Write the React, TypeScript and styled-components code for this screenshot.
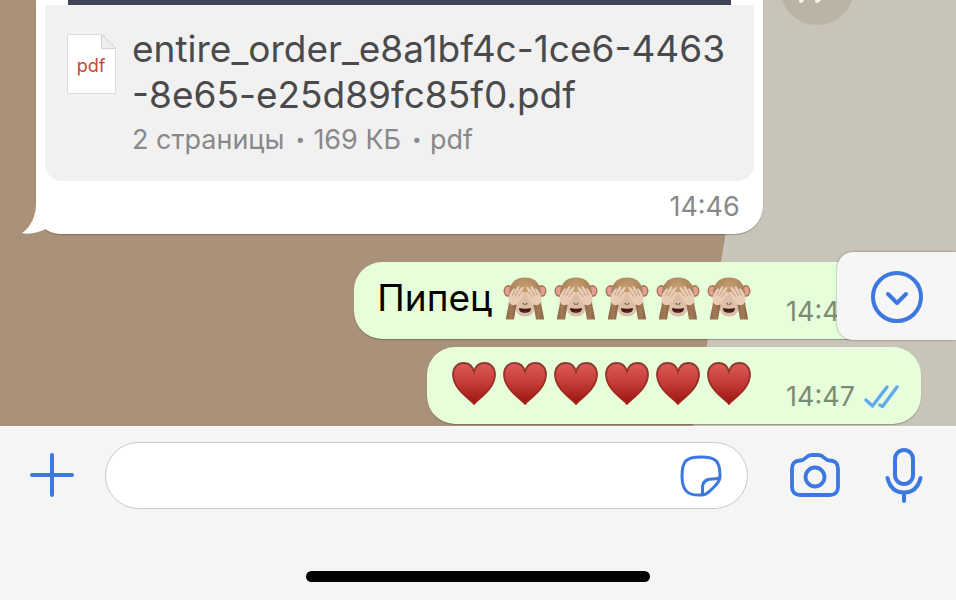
import React from "react";
import styled, { createGlobalStyle } from "styled-components";

const BLUE = "#3b78e0";

const GlobalStyle = createGlobalStyle`
  * { box-sizing: border-box; }
  body { margin: 0; font-family: Inter, "Noto Sans", sans-serif; }
  button { border: 0; padding: 0; background: none; cursor: pointer; display: grid; place-items: center; }
  svg { display: block; flex: none; }
`;

const Screen = styled.div`
  display: flex;
  flex-direction: column;
  height: 100vh;
  overflow: hidden;
  background: #f5f5f5;
`;

const Chat = styled.main`
  position: relative;
  flex: 1;
  min-height: 0;
  display: flex;
  flex-direction: column;
  justify-content: flex-end;
  gap: 8px;
  padding-bottom: 2px;
  overflow: hidden;
  background: #aa9179;
`;

const Wallpaper = styled.div`
  position: absolute;
  inset: 0;
  background: #c9c4b8;
  clip-path: polygon(79% 0, 100% 0, 100% 100%, 72.5% 100%, 75.9% 55%);
`;

const IncomingRow = styled.div`
  position: relative;
  display: flex;
  align-items: flex-start;
  gap: 17px;
  padding-left: 36px;
  margin-bottom: 20px;
`;

const DocumentBubble = styled.article`
  position: relative;
  width: 79%;
  padding: 0 9px;
  background: #fff;
  border-radius: 0 0 28px 24px;
  box-shadow: 0 1px 1px rgba(0, 0, 0, 0.25);
`;

const Tail = styled.svg`
  position: absolute;
  left: -14px;
  bottom: 0;
`;

const Preview = styled.div`
  height: 5px;
  margin: 0 23px;
  background: #3f4555;
`;

const FileCard = styled.a`
  position: relative;
  display: flex;
  gap: 16px;
  padding: 21px 22px 24px;
  border-radius: 0 0 17px 17px;
  background: #f1f1f1;
  color: #4a4a4c;
  text-decoration: none;
`;

const FileIcon = styled.svg`
  margin-top: 8px;
`;

const FileName = styled.div`
  font-size: 37px;
  line-height: 46px;
  white-space: nowrap;
`;

const FileMeta = styled.div`
  display: flex;
  align-items: center;
  gap: 11px;
  margin-top: 4px;
  font-size: 27px;
  line-height: 35px;
  color: #89898b;
`;

const Dot = styled.small`
  width: 7px;
  font-size: 17px;
  text-align: center;
`;

const Time = styled.time`
  font-size: 27px;
  line-height: 32px;
  color: #89898b;
`;

const BubbleFooter = styled.div`
  display: flex;
  justify-content: flex-end;
  padding: 10px 14px 11px;
`;

const ForwardButton = styled.button`
  width: 74px;
  height: 74px;
  margin-top: -49px;
  border-radius: 50%;
  background: #bbb4a5;
`;

const Outgoing = styled.article<{ $inset: number }>`
  position: relative;
  align-self: flex-end;
  display: flex;
  align-items: center;
  height: 77px;
  margin-right: 35px;
  padding: 0 22px 0 ${(p) => p.$inset}px;
  border-radius: 28px;
  background: #e6ffda;
  box-shadow: 0 1px 1px rgba(0, 0, 0, 0.25);
`;

const MessageText = styled.span`
  margin: 0 11px 5px 0;
  font-size: 37px;
  line-height: 46px;
  color: #000;
`;

const EmojiRow = styled.span`
  display: flex;
  gap: 7px;
  margin: 0 35px 5px 0;
`;

const Stamp = styled.span`
  display: flex;
  align-items: center;
  gap: 9px;
  align-self: flex-end;
  padding-bottom: 11px;
  time { color: #7c8b75; }
`;

const ScrollDown = styled.button`
  position: absolute;
  right: 0;
  bottom: 86px;
  width: 119px;
  height: 88px;
  padding-top: 2px;
  border-radius: 16px 0 0 16px;
  background: #f6f6f6;
  box-shadow: 0 0 2px rgba(0, 0, 0, 0.5);
`;

const Composer = styled.footer`
  display: flex;
  flex-direction: column;
  border-top: 1px solid #f9f9f8;
  background: #f5f5f5;
`;

const Controls = styled.form`
  display: flex;
  align-items: center;
  padding: 15px 33px 0 30px;
`;

const Field = styled.div`
  flex: 1;
  min-width: 0;
  display: flex;
  align-items: center;
  height: 67px;
  margin: 0 42px 0 31px;
  padding: 0 25px 0 28px;
  border: 1px solid #c9c9c9;
  border-radius: 34px;
  background: #fff;
`;

const TextInput = styled.input`
  flex: 1;
  min-width: 0;
  border: 0;
  outline: 0;
  background: transparent;
  font: 36px Inter, sans-serif;
`;

const MicButton = styled.button`
  margin-left: 45px;
`;

const HomeIndicator = styled.div`
  align-self: center;
  width: 36%;
  height: 11px;
  margin: 62px 0 18px;
  border-radius: 6px;
  background: #000;
`;

const Monkey = () => (
  <svg width="44" height="43" viewBox="0 0 44 43">
    <ellipse cx="5.500" cy="14" rx="5" ry="6" fill="#a57952" />
    <ellipse cx="38.500" cy="14" rx="5" ry="6" fill="#a57952" />
    <ellipse cx="5" cy="14" rx="3" ry="4.200" fill="#e79d95" />
    <ellipse cx="39" cy="14" rx="3" ry="4.200" fill="#e79d95" />
    <path d="M22 .5C11 .5 6 8 6 17c0 10 6 17 16 17s16-7 16-17C38 8 33 .5 22 .5Z" fill="url(#fur)" />
    <path d="M22 15c-5 0-10 7-9.500 16 .5 5 4 8.500 9.500 8.500S31 36 31.500 31C32 22 27 15 22 15Z" fill="#dcbfa6" />
    <path d="M20.200 26.300l.8 1.200M23.800 26.300l-.8 1.200" stroke="#745044" strokeWidth="1.200" strokeLinecap="round" />
    <path d="M16 31q6 1.500 12 0c0 3.800-2.500 4.800-6 4.800s-6-1-6-4.800Z" fill="#421d1b" />
    <path d="M19.500 35q2.500-.9 5 0-2.500.9-5 0Z" fill="#8f3a34" />
    <path d="M6 23 13.500 28 11 42.500H3C3.500 35 6 30 6 23Z" fill="url(#arm)" />
    <path d="M38 23 30.500 28 33 42.500h8C40.500 35 38 30 38 23Z" fill="url(#arm)" />
    <path d="M6 25C4.500 20 6.500 16 10 12q1-1.500 2 0l-.5 2 3-4.500q1.500-1 2 .5l-1.500 4 4-4q1.500-.6 1.600 1L18 16l2.600-1.500q1.300.3.6 1.800C18 21 17 26 12 28c-3 .5-5-.5-6-3Z" fill="#e8ccb5" />
    <path d="M38 25c1.500-5-.5-9-4-13q-1-1.500-2 0l.5 2-3-4.500q-1.500-1-2 .5l1.500 4-4-4q-1.500-.6-1.600 1L26 16l-2.600-1.500q-1.300.3-.6 1.800C26 21 27 26 32 28c3 .5 5-.5 6-3Z" fill="#e8ccb5" />
    <path d="M11.500 14 9.800 18M15 14l-2.500 4.500M18 16l-3 3.500M32.500 14l1.700 4M29 14l2.500 4.500M26 16l3 3.500" fill="none" stroke="#bd987b" strokeWidth=".9" strokeLinecap="round" />
  </svg>
);

const Heart = () => (
  <svg width="44" height="43" viewBox="0 0 44 43">
    <path d="M22 42C18 37 1 27 1 12.500 1 5.500 5.500 1 11.500 1 16.500 1 20.500 4 22 9.500 23.500 4 27.500 1 32.500 1 38.500 1 43 5.500 43 12.500 43 27 26 37 22 42Z" fill="url(#heart)" stroke="url(#heartEdge)" strokeWidth="1.800" />
  </svg>
);

const GradientHolder = styled.div`
  height: 0;
  overflow: hidden;
`;

const Gradients = () => (
  <GradientHolder aria-hidden="true">
    <svg width="0" height="0">
      <defs>
        <radialGradient id="fur" cx=".5" cy=".3" r=".65">
          <stop offset="0" stopColor="#c9a071" />
          <stop offset="1" stopColor="#9c7550" />
        </radialGradient>
        <linearGradient id="arm" x1="0" x2="1" y1="0" y2="0">
          <stop offset="0" stopColor="#8f6848" />
          <stop offset=".5" stopColor="#a27a57" />
          <stop offset="1" stopColor="#886142" />
        </linearGradient>
        <linearGradient id="heart" x1="0" x2="0" y1="0" y2="1">
          <stop offset="0" stopColor="#dc5c58" />
          <stop offset=".5" stopColor="#c53a35" />
          <stop offset="1" stopColor="#98150f" />
        </linearGradient>
        <linearGradient id="heartEdge" x1="0" x2="0" y1="0" y2="1">
          <stop offset="0" stopColor="#8c3a2e" />
          <stop offset="1" stopColor="#a82019" />
        </linearGradient>
      </defs>
    </svg>
  </GradientHolder>
);

const Emojis = ({ label, count, children }: { label: string; count: number; children: React.ReactNode }) => (
  <EmojiRow role="img" aria-label={label.repeat(count)}>
    {Array.from({ length: count }, (_, i) => (
      <React.Fragment key={i}>{children}</React.Fragment>
    ))}
  </EmojiRow>
);

const Ticks = () => (
  <svg width="35" height="24" viewBox="0 0 35 24" fill="none" stroke="#62aaf0" strokeWidth="3.400" strokeLinecap="round" strokeLinejoin="round">
    <path d="M2 15 8.500 21 23 2M16 20l2.500 1.500L33 2" />
  </svg>
);

export default function App() {
  return (
    <Screen>
      <GlobalStyle />
      <Gradients />
      <Chat>
        <Wallpaper />
        <IncomingRow>
          <DocumentBubble>
            <Tail width="36" height="44" viewBox="0 0 36 44" fill="#fff">
              <path d="M14 0v14C14 26 9 37 0 43c8 2 17-1 24-4V0Z" />
            </Tail>
            <Preview />
            <FileCard href="#file">
              <FileIcon width="49" height="60" viewBox="0 0 49 60">
                <path d="M.5.500H35L48.500 14v45.500H.5Z" fill="#fff" stroke="#dcdcdc" />
                <path d="M34.500.500V14.500h14Z" fill="#efefef" stroke="#d4d4d4" />
                <text x="24" y="38" textAnchor="middle" fontSize="18" fill="#c3483f">pdf</text>
              </FileIcon>
              <div>
                <FileName>entire_order_e8a1bf4c-1ce6-4463<br />-8e65-e25d89fc85f0.pdf</FileName>
                <FileMeta>
                  <span>2 страницы</span><Dot>•</Dot><span>169 КБ</span><Dot>•</Dot><span>pdf</span>
                </FileMeta>
              </div>
            </FileCard>
            <BubbleFooter><Time>14:46</Time></BubbleFooter>
          </DocumentBubble>
          <ForwardButton aria-label="Переслать">
            <svg width="40" height="36" viewBox="0 0 40 36" fill="none" stroke="#f5f2eb" strokeWidth="4" strokeLinecap="round" strokeLinejoin="round">
              <path d="M20 6v8C9 15 4 22 4 31c4-6 8-8 16-8v8l15-12.500Z" />
            </svg>
          </ForwardButton>
        </IncomingRow>
        <Outgoing $inset={23}>
          <MessageText>Пипец</MessageText>
          <Emojis label="🙈" count={5}><Monkey /></Emojis>
          <Stamp><Time>14:47</Time><Ticks /></Stamp>
        </Outgoing>
        <Outgoing $inset={25}>
          <Emojis label="❤️" count={6}><Heart /></Emojis>
          <Stamp><Time>14:47</Time><Ticks /></Stamp>
        </Outgoing>
        <ScrollDown aria-label="Вниз">
          <svg width="52" height="52" viewBox="0 0 52 52" fill="none" stroke={BLUE} strokeWidth="4" strokeLinecap="round" strokeLinejoin="round">
            <circle cx="26" cy="26" r="24" />
            <path d="m17 23 9 9 9-9" />
          </svg>
        </ScrollDown>
      </Chat>
      <Composer>
        <Controls onSubmit={(e) => e.preventDefault()}>
          <button type="button" aria-label="Добавить">
            <svg width="44" height="46" viewBox="0 0 44 46" stroke={BLUE} strokeWidth="4" strokeLinecap="round">
              <path d="M22 2v40M2 22h40" />
            </svg>
          </button>
          <Field>
            <TextInput type="text" aria-label="Сообщение" />
            <button type="button" aria-label="Стикеры">
              <svg width="42" height="42" viewBox="0 0 42 42" fill="none" stroke={BLUE} strokeWidth="3" strokeLinecap="round" strokeLinejoin="round">
                <path d="M22 40C8 41 2 36 2 21S6 2 21 2s19 4 19 19c0 5-3 8-7 12s-7 7-11 7Z" />
                <path d="M22.500 39.500V33C22.500 27 26 24 32 24q5 0 7.500-1" />
              </svg>
            </button>
          </Field>
          <button type="button" aria-label="Камера">
            <svg width="50" height="46" viewBox="0 0 50 46" fill="none" stroke={BLUE} strokeWidth="3.800" strokeLinejoin="round">
              <path d="M10 7.500C13 7.500 14 6.500 15.500 5 17.500 3 19 2 21.500 2h7C31 2 32.500 3 34.500 5 36 6.500 37 7.500 40 7.500c5 0 8 3 8 8V34c0 5-3 8-8 8H10c-5 0-8-3-8-8V15.500c0-5 3-8 8-8Z" />
              <circle cx="25" cy="24" r="9.500" />
            </svg>
          </button>
          <MicButton type="button" aria-label="Голосовое сообщение">
            <svg width="38" height="56" viewBox="0 0 38 56" fill="none" stroke={BLUE} strokeWidth="4" strokeLinecap="round">
              <rect x="10" y="2" width="18" height="34" rx="9" />
              <path d="M2.500 30C5 40 10 44.500 19 44.500S33 40 35.500 30M19 45v8" />
            </svg>
          </MicButton>
        </Controls>
        <HomeIndicator />
      </Composer>
    </Screen>
  );
}
